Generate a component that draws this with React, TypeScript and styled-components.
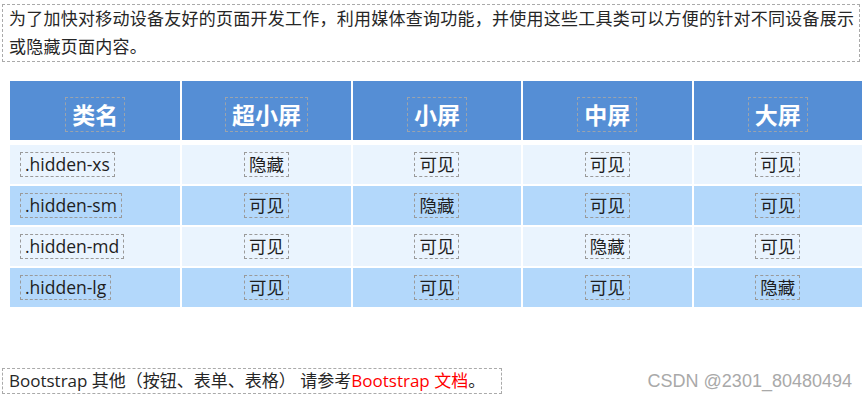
import { FC } from 'react';
import styled, { createGlobalStyle } from 'styled-components';

const GlobalStyle = createGlobalStyle`
  body {
    margin: 0;
    background: #fff;
    font-family: "Open Sans", "Noto Sans CJK SC", sans-serif;
    color: #222;
  }
`;

const Page = styled.div`
  width: 868px;
  height: 399px;
  padding: 4px 0 0 2px;
  box-sizing: border-box;
  overflow: hidden;
`;

const Intro = styled.p`
  width: 858px;
  box-sizing: border-box;
  margin: 0;
  padding: 0 0 0 6px;
  border: 1px dashed #aaa;
  font-size: 17px;
  letter-spacing: 0.25px;
  line-height: 28px;
  white-space: nowrap;
  color: #262626;
`;

const Table = styled.table`
  margin: 17px 0 0 6px;
  border-collapse: separate;
  border-spacing: 2px;
  table-layout: fixed;
  width: 856px;
`;

const HeadCell = styled.th`
  height: 62px;
  padding: 8px 0 0;
  box-sizing: border-box;
  background: #558ed5;
  border-bottom: 3px solid #fff;
  text-align: center;
  vertical-align: middle;
`;

const HeadLabel = styled.span`
  display: inline-block;
  padding: 0 6px;
  border: 1px dashed #9aa3ad;
  font-family: "Noto Sans CJK SC", sans-serif;
  font-size: 23px;
  font-weight: 700;
  line-height: 33px;
  color: #fff;
`;

const Cell = styled.td<{ $alt: boolean; $first?: boolean }>`
  height: 39px;
  padding: 0 0 0 ${({ $first }) => ($first ? '10px' : '0')};
  box-sizing: border-box;
  background: ${({ $alt }) => ($alt ? '#b3d8fb' : '#eaf4fe')};
  text-align: ${({ $first }) => ($first ? 'left' : 'center')};
  vertical-align: middle;
`;

const Tag = styled.span`
  display: inline-block;
  padding: 0 4px;
  border: 1px dashed #9a9a9a;
  font-size: 17.5px;
  line-height: 23px;
  color: #1e1e1e;
`;

const Footer = styled.div`
  display: flex;
  align-items: center;
  justify-content: space-between;
  margin-top: 59px;
  padding-right: 16px;
`;

const Note = styled.div`
  padding: 0 16px 0 6px;
  border: 1px dashed #aaa;
  font-size: 17px;
  line-height: 24px;
  white-space: nowrap;
  color: #262626;
`;

const Link = styled.span`
  color: #ff0000;
`;

const Mark = styled.span`
  font-family: "Liberation Sans", Arial, sans-serif;
  font-size: 18px;
  color: #a9a9a9;
`;

const heads = ['类名', '超小屏', '小屏', '中屏', '大屏'];
const sizes = ['xs', 'sm', 'md', 'lg'];

const App: FC = () => (
  <Page>
    <GlobalStyle />
    <Intro>
      为了加快对移动设备友好的页面开发工作，利用媒体查询功能，并使用这些工具类可以方便的针对不同设备展示
      <br />
      或隐藏页面内容。
    </Intro>
    <Table>
      <colgroup>
        <col style={{ width: 170 }} />
        <col style={{ width: 168 }} />
        <col style={{ width: 168 }} />
        <col style={{ width: 168 }} />
        <col style={{ width: 168 }} />
      </colgroup>
      <thead>
        <tr>
          {heads.map((h) => (
            <HeadCell key={h}>
              <HeadLabel>{h}</HeadLabel>
            </HeadCell>
          ))}
        </tr>
      </thead>
      <tbody>
        {sizes.map((s, i) => (
          <tr key={s}>
            <Cell $alt={i % 2 === 1} $first>
              <Tag>.hidden-{s}</Tag>
            </Cell>
            {sizes.map((c, j) => (
              <Cell key={c} $alt={i % 2 === 1}>
                <Tag>{i === j ? '隐藏' : '可见'}</Tag>
              </Cell>
            ))}
          </tr>
        ))}
      </tbody>
    </Table>
    <Footer>
      <Note>
        Bootstrap 其他（按钮、表单、表格） 请参考<Link>Bootstrap 文档</Link>。
      </Note>
      <Mark>CSDN @2301_80480494</Mark>
    </Footer>
  </Page>
);

export default App;
